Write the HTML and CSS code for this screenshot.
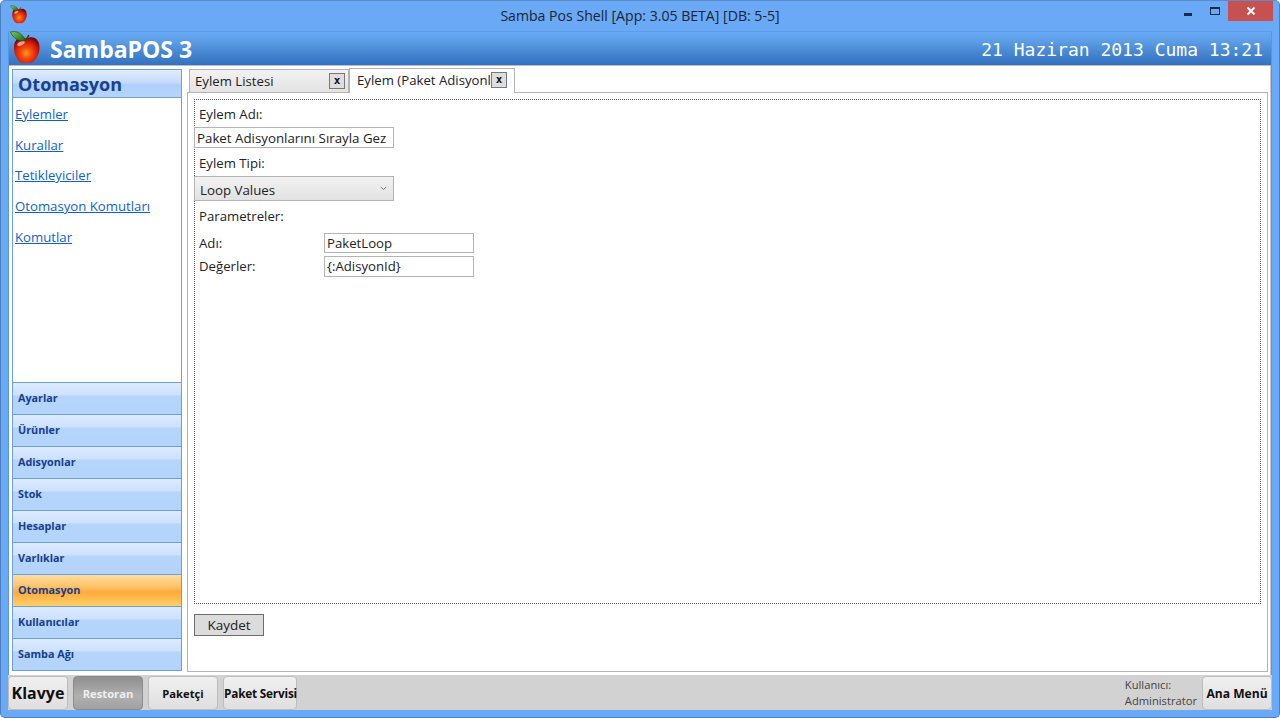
FILE: index.html
```html
<!DOCTYPE html>
<html lang="tr">
<head>
<meta charset="utf-8">
<title>Samba Pos Shell</title>
<link rel="stylesheet" href="styles.css">
</head>
<body>
<svg class="defs" width="0" height="0" aria-hidden="true">
  <defs>
    <radialGradient id="appleRed" cx="48%" cy="62%" r="62%">
      <stop offset="0" stop-color="#ff9a18"/>
      <stop offset=".32" stop-color="#f4500f"/>
      <stop offset=".68" stop-color="#de1c08"/>
      <stop offset="1" stop-color="#780504"/>
    </radialGradient>
    <linearGradient id="leafGreen" x1="0" y1="0" x2="1" y2="1">
      <stop offset="0" stop-color="#86c850"/>
      <stop offset="1" stop-color="#176418"/>
    </linearGradient>
    <symbol id="apple" viewBox="0 0 30 33">
      <path d="M16.500 8C21 4.500 29 6 29.500 16 30 24 24 32 20 32 18 32 17.500 31.400 16.500 31.400 15.500 31.400 15 32 13 32 9 32 3.500 24 4 16 4.500 6 12 4.500 16.500 8Z" fill="url(#appleRed)"/>
      <ellipse cx="11" cy="12.500" rx="4" ry="1.800" fill="#ffd9c0" opacity=".7" transform="rotate(-25 11 12.500)"/>
      <path d="M16 10C16.500 8 17.500 6 19 4" fill="none" stroke="#5a3410" stroke-width="1.600"/>
      <path d="M.5 1C6 -.5 12 1.500 15.500 9.500 10.500 11 3.500 8.500 .5 1Z" fill="url(#leafGreen)" stroke="#14501a" stroke-width=".6"/>
    </symbol>
  </defs>
</svg>
<div class="window">
  <div class="titlebar">
    <svg class="title-icon"><use href="#apple"/></svg>
    <span class="title-text">Samba Pos Shell [App: 3.05 BETA] [DB: 5-5]</span>
    <div class="caption">
      <span class="cap-min"></span>
      <span class="cap-max"></span>
      <span class="cap-close"><svg width="10" height="10" viewBox="0 0 10 10"><path d="M1.500 1.500l7 7M8.500 1.500l-7 7" stroke="#fff" stroke-width="2"/></svg></span>
    </div>
  </div>
  <div class="client">
    <header class="appbar">
      <div class="brand">
        <svg class="brand-icon"><use href="#apple"/></svg>
        <span class="brand-text">SambaPOS 3</span>
      </div>
      <span class="clock">21 Haziran 2013 Cuma 13:21</span>
    </header>
    <main class="content">
      <aside class="sidebar">
        <div class="side-head">Otomasyon</div>
        <nav class="side-links">
          <a href="#">Eylemler</a>
          <a href="#">Kurallar</a>
          <a href="#">Tetikleyiciler</a>
          <a href="#">Otomasyon Komutları</a>
          <a href="#">Komutlar</a>
        </nav>
        <div class="side-cats">
          <div class="cat">Ayarlar</div>
          <div class="cat">Ürünler</div>
          <div class="cat">Adisyonlar</div>
          <div class="cat">Stok</div>
          <div class="cat">Hesaplar</div>
          <div class="cat">Varlıklar</div>
          <div class="cat cat-active">Otomasyon</div>
          <div class="cat">Kullanıcılar</div>
          <div class="cat">Samba Ağı</div>
        </div>
      </aside>
      <section class="workspace">
        <div class="tabs">
          <div class="tab">
            <span class="tab-label">Eylem Listesi</span>
            <span class="tab-x">x</span>
          </div>
          <div class="tab tab-active">
            <span class="tab-label">Eylem (Paket Adisyonl</span>
            <span class="tab-x">x</span>
          </div>
        </div>
        <div class="panel">
          <form class="editor">
            <div class="label l-first">Eylem Adı:</div>
            <div class="field field-name">Paket Adisyonlarını Sırayla Gez</div>
            <div class="label l-type">Eylem Tipi:</div>
            <div class="combo">
              <span class="combo-text">Loop Values</span>
              <svg width="7" height="5" viewBox="0 0 7 5"><path d="M.8 1l2.700 2.500L6.200 1" fill="none" stroke="#777" stroke-width="1"/></svg>
            </div>
            <div class="label l-params">Parametreler:</div>
            <div class="param-grid">
              <span class="param-label">Adı:</span>
              <div class="field field-param">PaketLoop</div>
              <span class="param-label">Değerler:</span>
              <div class="field field-param">{:AdisyonId}</div>
            </div>
          </form>
          <div class="save-row"><button type="button" class="save">Kaydet</button></div>
        </div>
      </section>
    </main>
    <footer class="bottombar">
      <button type="button" class="bbtn bbtn-keyboard">Klavye</button>
      <button type="button" class="bbtn bbtn-active">Restoran</button>
      <button type="button" class="bbtn">Paketçi</button>
      <button type="button" class="bbtn bbtn-service">Paket Servisi</button>
      <div class="user"><span>Kullanıcı:</span><span>Administrator</span></div>
      <button type="button" class="bbtn bbtn-menu">Ana Menü</button>
    </footer>
  </div>
</div>
</body>
</html>
```
FILE: styles.css
```css
* { box-sizing: border-box; }
html, body { margin: 0; height: 100%; overflow: hidden; }
body { font-family: "Open Sans", "Noto Sans", sans-serif; background: #fff; }
.defs { position: absolute; }
.window {
  width: 1280px; height: 718px;
  background: #69a9f5;
  border: 1px solid #4d7fbe;
  border-top-color: #5a8bcb;
  border-radius: 5px;
  display: flex; flex-direction: column;
  padding: 0 7px 7px;
}
.titlebar { height: 30px; display: flex; align-items: flex-start; position: relative; flex: none; }
.title-icon { width: 17px; height: 19px; margin: 4px 0 0 2px; }
.title-text {
  position: absolute; left: 0; right: 0; top: 6px;
  text-align: center; font-size: 14.100px; line-height: 17px; color: #1a2433;
}
.caption { position: absolute; right: -1px; top: 0; display: flex; align-items: flex-start; }
.cap-min { width: 8px; height: 3px; background: #1b2c44; margin: 12px 18px 0 0; }
.cap-max { width: 10px; height: 8px; border: 1px solid #1b2c44; border-top-width: 2px; margin: 6px 8px 0 0; }
.cap-close { width: 45px; height: 20px; background: #c75050; display: flex; align-items: center; justify-content: center; }
.client { flex: 1; display: flex; flex-direction: column; min-height: 0; border: 1px solid #5b95dc; border-bottom: none; border-top-color: #5d9ce6; }
.appbar {
  height: 33px; flex: none;
  display: flex; align-items: center; justify-content: space-between;
  background: linear-gradient(#68aaf6 0%, #5f9fe8 25%, #3f7fcb 75%, #3472c0 100%);
  padding-right: 8px;
}
.brand { display: flex; align-items: center; }
.brand-icon { width: 30px; height: 33px; margin: -3px 10px 0 1px; flex: none; overflow: visible; }
.brand-text { font-family: "Open Sans", sans-serif; font-weight: 700; font-size: 23px; line-height: 30px; color: #fff; }
.clock { font-family: "DejaVu Sans Mono", monospace; font-size: 18px; color: #fff; line-height: 24px; margin-top: 2px; }
.content { flex: 1; min-height: 0; background: #fff; display: flex; padding: 3px 2px 3px 3px; gap: 5px; border-right: 1px solid #c8c8c8; border-top: 1px solid #bdbdbd; }
.sidebar { width: 170px; flex: none; border: 1px solid #6f9fdc; display: flex; flex-direction: column; background: #fff; margin-bottom: 1px; }
.side-head {
  height: 28px; flex: none; padding-left: 5px;
  font-family: "Open Sans", sans-serif; font-weight: 700; font-size: 18px; line-height: 28px; color: #17408f;
  background: linear-gradient(#e0edff 0%, #c6dcfd 45%, #aed0fb 55%, #b6d5fc 100%);
  border-bottom: 1px solid #6f9fdc;
}
.side-links { flex: 1; display: flex; flex-direction: column; padding: 6px 0 0 2px; gap: 10.700px; }
.side-links a { font-size: 13.200px; line-height: 20px; color: #0f62c9; }
.side-cats { flex: none; }
.cat {
  height: 32px; padding-left: 5px;
  font-family: "Open Sans", sans-serif; font-weight: 700; font-size: 10.800px; line-height: 29px; color: #173f8e;
  background: linear-gradient(#dcebff 0%, #cde2fe 38%, #b5d5fc 42%, #b3d3fb 100%);
  border-top: 1px solid #6f9fdc;
}
.cat-active { background: linear-gradient(#ffdca0 0%, #ffc56c 35%, #ffaa3c 55%, #ffd068 100%); }
.workspace { flex: 1; min-width: 0; display: flex; flex-direction: column; }
.tabs { height: 23px; flex: none; display: flex; align-items: flex-end; padding-left: 2px; position: relative; z-index: 1; }
.tab {
  width: 160px; height: 23px; display: flex; align-items: center; justify-content: space-between;
  border: 1px solid #b4b4b4; border-bottom: none; padding: 0 3px 0 5px;
  background: linear-gradient(#f2f2f2, #e3e3e3);
}
.tab-active { width: 166px; height: 25px; margin: 0 0 -1px 0; background: #fff; padding: 0 7px 2px 7px; }
.tab-label { font-size: 13.200px; line-height: 18px; color: #222; white-space: nowrap; flex: 1; min-width: 0; }
.tab-x {
  width: 16px; height: 16px; flex: none; display: flex; align-items: center; justify-content: center; position: relative;
  border: 1px solid #777; background: #dedede; font: 700 11px/14px "DejaVu Sans Mono", monospace; color: #111;
}
.panel { flex: 1; min-height: 0; border: 1px solid #b4b4b4; display: flex; flex-direction: column; padding: 6px 6px 0; background: #fff; }
.editor { height: 505px; flex: none; border: 1px dotted #555; display: flex; flex-direction: column; align-items: flex-start; }
.label { font-size: 13.200px; line-height: 18px; color: #222; padding-left: 4px; }
.l-first { margin-top: 5px; }
.l-type { margin-top: 6px; }
.l-params { margin-top: 6px; }
.field { border: 1px solid #b4b4b4; background: #fff; font-size: 13.200px; color: #222; white-space: nowrap; }
.field-name { width: 200px; height: 21px; line-height: 20px; padding-left: 2px; margin: 4px 0 0 -1px; font-size: 13.300px; }
.combo {
  width: 200px; height: 25px; margin: 4px 0 0 -1px; border: 1px solid #b4b4b4;
  background: linear-gradient(#f2f2f2, #e2e2e2);
  display: flex; align-items: center; justify-content: space-between; padding: 0 6px 0 5px;
  font-size: 13.300px; color: #222;
}
.combo-text { line-height: 18px; padding-top: 2px; }
.param-grid { display: grid; grid-template-columns: 125px 150px; grid-template-rows: 20px 21px; row-gap: 3px; margin: 8px 0 0 4px; align-items: center; }
.param-label { font-size: 13.200px; line-height: 18px; color: #222; }
.param-label:nth-of-type(2) { margin-top: -1px; }
.field-param { height: 100%; line-height: 19px; padding-left: 2px; }
.save-row { padding-top: 10px; }
.save { width: 70px; height: 22px; padding: 0; border: 1px solid #6e6e6e; background: #dcdcdc; font-family: inherit; font-size: 13.500px; color: #222; display: block; }
.bottombar { height: 35px; flex: none; background: #d2d2d2; display: flex; align-items: flex-end; gap: 5px; margin: 0 -1px; padding-top: 1px; }
.bbtn {
  width: 70px; height: 34px; padding: 0; border: 1px solid #bdbdbd; border-radius: 4px;
  background: linear-gradient(#f0f0f0, #dfdfdf);
  font-family: "Open Sans", sans-serif; font-size: 11.200px; font-weight: 700; color: #111; white-space: nowrap;
}
.bbtn-keyboard { width: 60px; font-size: 16px; }
.bbtn-active { background: linear-gradient(#8f8f8f, #b0b0b0 60%, #a0a0a0); color: #eee; border-color: #8c8c8c; }
.bbtn-service { width: 74px; font-size: 11.800px; letter-spacing: -.2px; }
.bbtn-menu { font-size: 12.100px; }
.user { margin-left: auto; display: flex; flex-direction: column; font-size: 11.200px; line-height: 16px; color: #444; margin-bottom: 1px; }
```
